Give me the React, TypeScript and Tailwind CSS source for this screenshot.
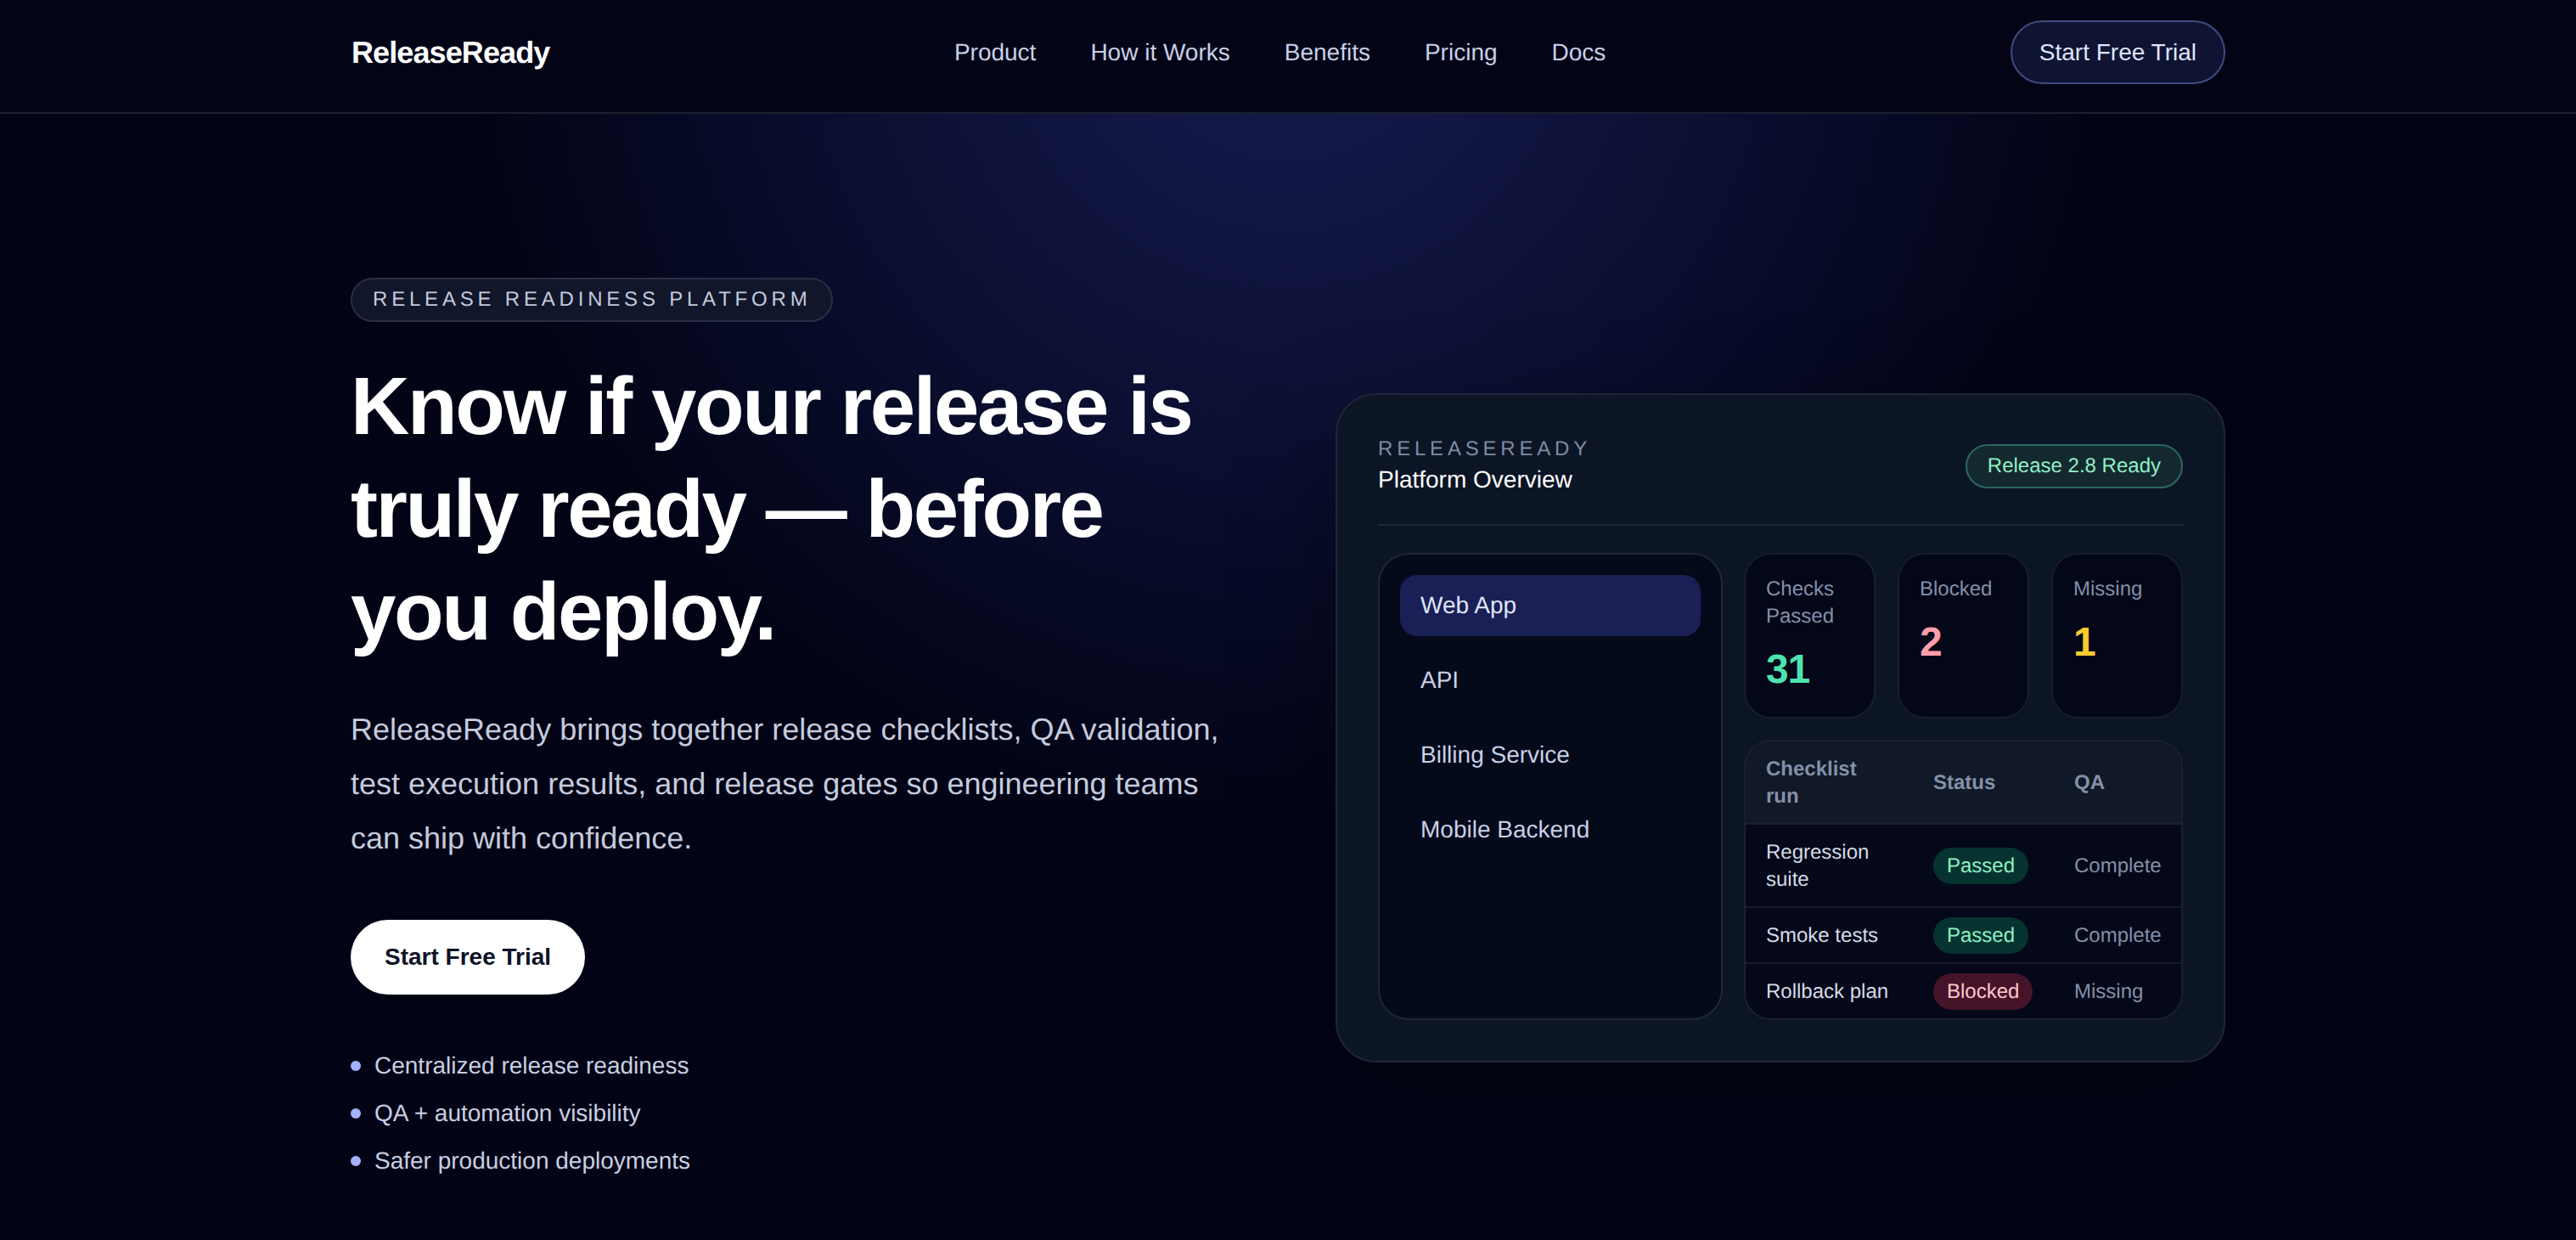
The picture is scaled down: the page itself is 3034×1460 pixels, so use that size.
import React from "react";

const navLinks = ["Product", "How it Works", "Benefits", "Pricing", "Docs"];
const bullets = ["Centralized release readiness", "QA + automation visibility", "Safer production deployments"];
const services = ["Web App", "API", "Billing Service", "Mobile Backend"];

const stats = [
  { label: "Checks Passed", value: "31", color: "text-[#4fe3ad]" },
  { label: "Blocked", value: "2", color: "text-[#ff9dab]" },
  { label: "Missing", value: "1", color: "text-[#ffcb2e]" },
];

const rows = [
  { name: "Regression suite", status: "Passed", qa: "Complete" },
  { name: "Smoke tests", status: "Passed", qa: "Complete" },
  { name: "Rollback plan", status: "Blocked", qa: "Missing" },
];

const App: React.FC = () => {
  return (
    <div className="min-h-screen overflow-hidden bg-[#020416] bg-[radial-gradient(circle_960px_at_1517px_0px,#161c52_0%,#020416_100%)] font-['Liberation_Sans',Arial,sans-serif] [text-rendering:geometricPrecision]">
      {/* Nav */}
      <header className="h-[134px] border-b-2 border-[#1c202e] bg-[#030517]">
        <div className="ml-[413px] mr-[413px] flex items-center justify-between pt-[24px]">
          <div className="pl-px text-[36px] font-bold tracking-[-0.9px] text-white">ReleaseReady</div>
          <nav className="flex gap-[64px] text-[28px] text-[#c9d0e6]">
            {navLinks.map((link) => (
              <a key={link}>{link}</a>
            ))}
          </nav>
          <button className="h-[75px] rounded-full border-2 border-[#424a7e] bg-[#0f1433] px-[32px] text-[28px] text-[#dfe4fb]">
            Start Free Trial
          </button>
        </div>
      </header>

      {/* Hero */}
      <main className="ml-[413px] mr-[413px] grid grid-cols-[1064px_1048px] items-center gap-[96px] pt-[193px]">
        <div>
          <span className="inline-block rounded-full border-2 border-[#2a2e45] bg-[#12162a] px-[24px] py-[8px] text-[24px] leading-[32px] tracking-[4.8px] text-[#c3cade]">
            RELEASE READINESS PLATFORM
          </span>
          <h1 className="mt-[39px] text-[96px] font-bold leading-[121px] tracking-[-2.4px] text-white">
            Know if your release is truly ready — before you deploy.
          </h1>
          <p className="mt-[46px] text-[36px] leading-[64px] text-[#c5cbdc]">
            ReleaseReady brings together release checklists, QA validation, test execution results, and release gates so
            engineering teams can ship with confidence.
          </p>
          <button className="mt-[64px] block h-[88px] rounded-full bg-white px-[40px] text-[28px] font-bold text-[#0d1226]">
            Start Free Trial
          </button>
          <ul className="mt-[65px] flex flex-col gap-[18px] text-[28px] leading-[38px] text-[#c9cfe0]">
            {bullets.map((item) => (
              <li key={item} className="flex items-center gap-[16px]">
                <span className="h-[12px] w-[12px] rounded-full bg-[#a5b0ff]" />
                {item}
              </li>
            ))}
          </ul>
        </div>

        {/* Platform card */}
        <section className="rounded-[48px] border-2 border-[#1f2636] bg-[#0c1525] p-[48px] shadow-[0_40px_120px_rgba(0,0,0,0.35)]">
          <div className="flex items-center justify-between border-b-2 border-[#1f2636] pb-[32px]">
            <div>
              <div className="text-[24px] leading-[32px] tracking-[4.8px] text-[#7f8ba3]">RELEASEREADY</div>
              <div className="text-[28px] leading-[40px] text-white">Platform Overview</div>
            </div>
            <span className="rounded-full border-2 border-[#2a6760] bg-[#14292f] px-[24px] py-[8px] text-[24px] leading-[32px] text-[#8ff0c6]">
              Release 2.8 Ready
            </span>
          </div>

          <div className="mt-[32px] grid grid-cols-[406px_517px] gap-[25px]">
            <div className="flex flex-col gap-[16px] rounded-[36px] border-2 border-[#1f2636] bg-[#040a1a] p-[24px]">
              {services.map((name, i) => (
                <div
                  key={name}
                  className={
                    i === 0
                      ? "flex h-[72px] items-center rounded-[20px] bg-[#1a1f55] px-[24px] text-[28px] text-[#dfe4fb]"
                      : "flex h-[72px] items-center rounded-[20px] px-[24px] text-[28px] text-[#c9d0e6]"
                  }
                >
                  {name}
                </div>
              ))}
            </div>

            <div className="flex flex-col gap-[25px]">
              <div className="grid grid-cols-3 gap-[26px]">
                {stats.map((s) => (
                  <div key={s.label} className="rounded-[32px] border-2 border-[#171d2d] bg-[#030718] px-[24px] pb-[23px] pt-[25px]">
                    <div className="text-[24px] leading-[32px] text-[#8490a8]">{s.label}</div>
                    <div className={`mt-[14px] text-[48px] font-bold leading-[65px] tracking-[-1.2px] ${s.color}`}>{s.value}</div>
                  </div>
                ))}
              </div>

              <div className="overflow-hidden rounded-[32px] border-2 border-[#1a2030]">
                <table className="w-full table-fixed border-collapse text-left text-[24px] leading-[32px]">
                  <colgroup>
                    <col className="w-[197px]" />
                    <col className="w-[166px]" />
                    <col />
                  </colgroup>
                  <thead className="bg-[#111827] text-[#8490a8]">
                    <tr className="border-b-2 border-[#1a2030]">
                      <th className="px-[24px] pb-[15px] pt-[17px] font-bold">Checklist run</th>
                      <th className="px-[24px] pb-[15px] pt-[17px] font-bold">Status</th>
                      <th className="px-[24px] pb-[15px] pt-[17px] font-bold">QA</th>
                    </tr>
                  </thead>
                  <tbody className="bg-[#040818]">
                    {rows.map((r, i) => (
                      <tr key={r.name} className={i < 2 ? "border-b-2 border-[#141a2b]" : ""}>
                        <td className="px-[24px] pb-[15px] pt-[17px] text-[#d5dbe8]">{r.name}</td>
                        <td className="whitespace-nowrap px-[24px] pb-[15px] pt-[17px]">
                          <span
                            className={
                              r.status === "Passed"
                                ? "rounded-full bg-[#06332f] px-[16px] py-[8px] text-[#8ff0c6]"
                                : "rounded-full bg-[#451428] px-[16px] py-[8px] text-[#ffc9d2]"
                            }
                          >
                            {r.status}
                          </span>
                        </td>
                        <td className="whitespace-nowrap px-[24px] pb-[15px] pt-[17px] text-[#8490a8]">{r.qa}</td>
                      </tr>
                    ))}
                  </tbody>
                </table>
              </div>
            </div>
          </div>
        </section>
      </main>
    </div>
  );
};

export default App;
